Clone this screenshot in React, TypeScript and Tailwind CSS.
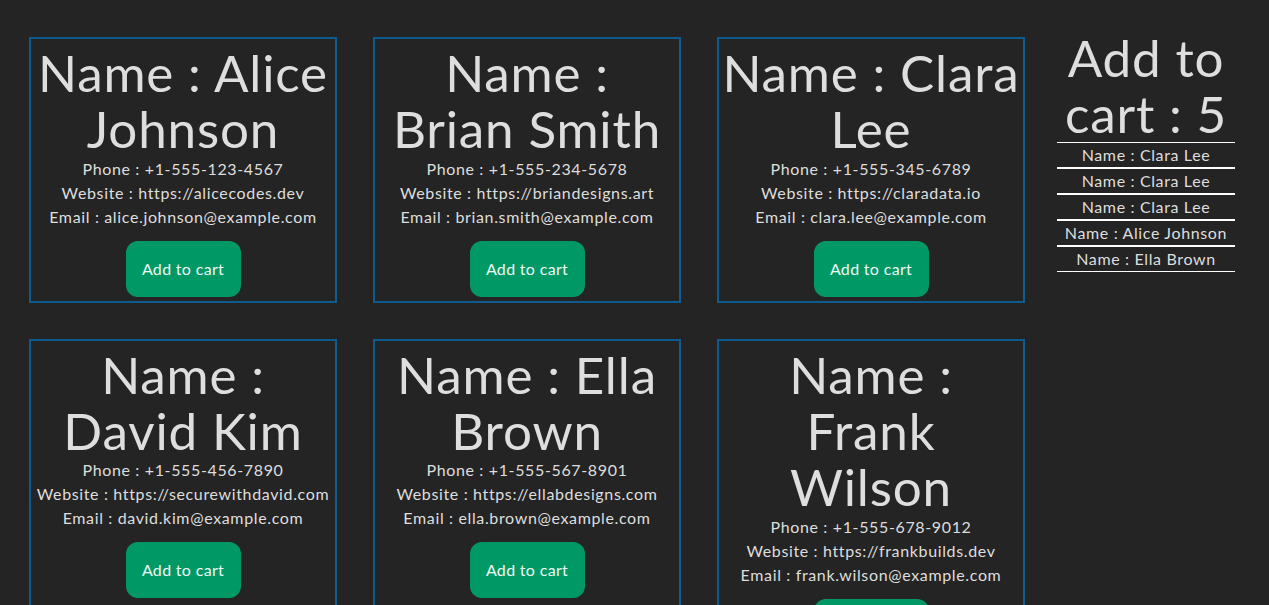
import React, { useState } from "react";

type Person = {
  name: string;
  phone: string;
  website: string;
  email: string;
};

const people: Person[] = [
  { name: "Alice Johnson", phone: "+1-555-123-4567", website: "https://alicecodes.dev", email: "alice.johnson@example.com" },
  { name: "Brian Smith", phone: "+1-555-234-5678", website: "https://briandesigns.art", email: "brian.smith@example.com" },
  { name: "Clara Lee", phone: "+1-555-345-6789", website: "https://claradata.io", email: "clara.lee@example.com" },
  { name: "David Kim", phone: "+1-555-456-7890", website: "https://securewithdavid.com", email: "david.kim@example.com" },
  { name: "Ella Brown", phone: "+1-555-567-8901", website: "https://ellabdesigns.com", email: "ella.brown@example.com" },
  { name: "Frank Wilson", phone: "+1-555-678-9012", website: "https://frankbuilds.dev", email: "frank.wilson@example.com" },
];

const Card = ({ person, onAdd }: { person: Person; onAdd: (p: Person) => void }) => {
  return (
    <div className="flex flex-col items-center border-2 border-[#0e5c8e] px-[3px] pt-[5px] pb-1 text-center">
      <h1 className="text-[51.2px] leading-[1.1] tracking-[0.016em]">Name : {person.name}</h1>
      <p className="leading-6 tracking-[0.04em]">Phone : {person.phone}</p>
      <p className="leading-6 tracking-[0.04em]">Website : {person.website}</p>
      <p className="leading-6 tracking-[0.04em]">Email : {person.email}</p>
      <button
        onClick={() => onAdd(person)}
        className="mt-3 h-[56px] w-[115px] rounded-xl bg-emerald-600 leading-6 tracking-[0.02em] text-[#eef7f2] cursor-pointer"
      >
        Add to cart
      </button>
    </div>
  );
};

const App = () => {
  const [cart, setCart] = useState<Person[]>([people[2], people[2], people[2], people[0], people[4]]);

  const addToCart = (p: Person) => {
    setCart((prev) => [...prev, p]);
  };

  return (
    <div className="flex min-h-screen items-start bg-[#242424] pl-[29px] pt-[29px] text-[#dedede] font-['Lato',sans-serif]">
      <div className="mt-2 grid grid-cols-[repeat(3,308px)] gap-9">
        {people.map((p, i) => (
          <Card key={i} person={p} onAdd={addToCart} />
        ))}
      </div>
      <div className="ml-8 w-[178px] text-center">
        <h1 className="text-[51.2px] leading-[1.1] tracking-[0.016em]">Add to cart : {cart.length}</h1>
        <ul>
          {cart.map((p, i) => (
            <li key={i} className="border-y border-white leading-6 tracking-[0.04em]">
              Name : {p.name}
            </li>
          ))}
        </ul>
      </div>
    </div>
  );
};

export default App;
